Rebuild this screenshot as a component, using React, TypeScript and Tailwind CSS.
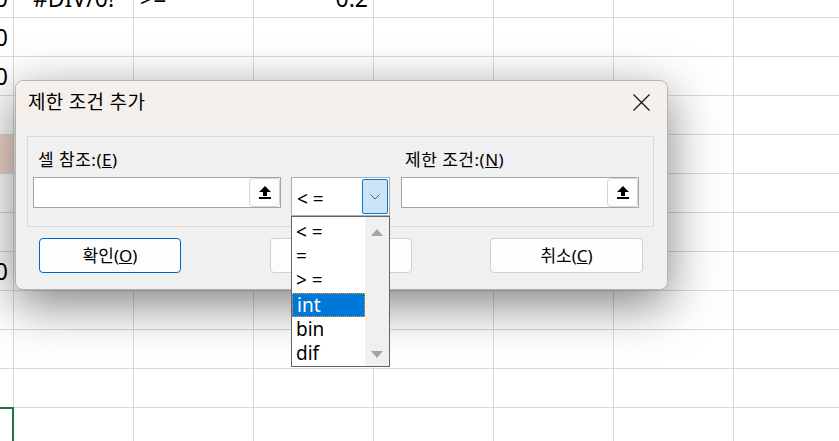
import React from "react";

const cols = [14, 120, 120, 120, 120, 120, 120, 120];
const font = { fontFamily: '"Noto Sans", "Noto Sans CJK KR", sans-serif' };

const cellText: Record<string, { text: string; align: string }> = {
  "0-0": { text: "0", align: "justify-end pr-[5px]" },
  "1-0": { text: "0", align: "justify-end pr-[5px]" },
  "2-0": { text: "0", align: "justify-end pr-[5px]" },
  "7-0": { text: "0", align: "justify-end pr-[5px]" },
  "0-1": { text: "#DIV/0!", align: "justify-center" },
  "0-2": { text: ">=", align: "justify-start pl-[6px]" },
  "0-3": { text: "0.2", align: "justify-end pr-[5px]" },
};

const Sheet = () => (
  <div className="mt-[-21px] text-[23px] text-black" style={font}>
    {Array.from({ length: 12 }).map((_, r) => (
      <div key={r} className="flex h-[39px]">
        {cols.map((w, c) => {
          const cell = cellText[`${r}-${c}`];
          const pink = r === 4 && c === 0;
          const sel = r === 11 && c === 0;
          return (
            <div
              key={c}
              style={{ width: w }}
              className={`shrink-0 flex items-center overflow-hidden border-r border-b border-[#d9d9d9] ${
                pink ? "bg-[#f0d8cc]" : ""
              } ${sel ? "border-t-2 border-r-2 border-t-[#217346] border-r-[#217346] -mt-px" : ""} ${
                cell ? cell.align : ""
              }`}
            >
              {cell && <span className="whitespace-nowrap leading-none">{cell.text}</span>}
            </div>
          );
        })}
      </div>
    ))}
  </div>
);

const UpArrow = () => (
  <svg width="12" height="13" viewBox="0 0 12 13">
    <polygon points="6,0 12,6 8,6 8,10 4,10 4,6 0,6" fill="#000" />
    <rect x="0" y="11" width="12" height="2" fill="#000" />
  </svg>
);

const RefInput = ({ width }: { width: number }) => (
  <div
    style={{ width }}
    className="h-[31px] flex items-center justify-end bg-white border border-[#a5a5a5]"
  >
    <div className="w-[31px] h-[29px] flex items-center justify-center bg-[#fdfdfd] border border-[#d5d5d5] rounded-[4px]">
      <UpArrow />
    </div>
  </div>
);

const items = ["< =", "=", "> =", "int", "bin", "dif"];

const Dropdown = () => (
  <div className="absolute left-[291px] top-[216px] w-[99px] h-[151px] bg-white border border-[#646464] flex" style={font}>
    <div className="flex-1 flex flex-col pt-[3px]">
      {items.map((it) => (
        <div
          key={it}
          className={`h-[24.6px] flex items-center pl-[4px] text-[19px] leading-none ${
            it === "int"
              ? "bg-[#0078d7] text-white border border-dotted border-[#f39c3a] pl-[3px]"
              : "text-black"
          }`}
        >
          {it}
        </div>
      ))}
    </div>
    <div className="w-[24px] bg-[#f0f0f0] flex flex-col items-center justify-between pt-[12px] pb-[8px]">
      <svg width="12" height="7" viewBox="0 0 12 7">
        <polygon points="6,0 12,7 0,7" fill="#a3a3a3" />
      </svg>
      <svg width="12" height="7" viewBox="0 0 12 7">
        <polygon points="0,0 12,0 6,7" fill="#a3a3a3" />
      </svg>
    </div>
  </div>
);

const Dialog = () => (
  <div
    className="absolute left-[15px] top-[80px] w-[653px] h-[210px] rounded-[8px] border border-[#b4b4b4] bg-[#f0f0f0] overflow-hidden shadow-[0_14px_50px_rgba(0,0,0,0.5)] text-black"
    style={font}
  >
    <div className="h-[43px] bg-[#f6f0ed] flex items-center justify-between pl-[12px] pr-[17px]">
      <span className="text-[19px] leading-none tracking-[0.3px]">제한 조건 추가</span>
      <svg width="17" height="17" viewBox="0 0 17 17">
        <path d="M0.5 0.5 L16.5 16.5 M16.5 0.5 L0.5 16.5" stroke="#1a1a1a" strokeWidth="1.3" />
      </svg>
    </div>
    <div className="ml-[11px] mr-[13px] mt-[12px] h-[91px] border border-[#dadada] pl-[5px] pt-[13px] flex gap-[10px]">
      <div className="flex flex-col">
        <span className="pl-[5px] text-[17px] leading-[20px] h-[27px] tracking-[0.5px]">
          셀 참조:(<u>E</u>)
        </span>
        <RefInput width={248} />
      </div>
      <div className="pt-[27px]">
        <div className="w-[99px] h-[39px] bg-white border border-[#adadad] flex items-center justify-between pl-[5px] pr-px">
          <span className="text-[19px] leading-none pt-[5px]">&lt; =</span>
          <div className="w-[26px] h-[35px] bg-[#cce4f7] border border-[#0078d4] rounded-[2px] flex items-center justify-center">
            <svg width="10" height="6" viewBox="0 0 10 6">
              <path d="M0.5 0.5 L5 5 L9.5 0.5" fill="none" stroke="#606060" strokeWidth="1" />
            </svg>
          </div>
        </div>
      </div>
      <div className="flex flex-col ml-px">
        <span className="pl-[4px] text-[17px] leading-[20px] h-[27px] tracking-[0.5px]">
          제한 조건:(<u>N</u>)
        </span>
        <RefInput width={238} />
      </div>
    </div>
    <div className="flex mt-[11px] pl-[23px] gap-0 text-[17px]">
      <button className="w-[142px] h-[35px] rounded-[4px] bg-[#fdfdfd] border border-[#0067c0]">
        확인(<u>O</u>)
      </button>
      <button className="ml-[89px] w-[142px] h-[35px] rounded-[4px] bg-[#fdfdfd] border border-[#d0d0d0]">
        추가(<u>A</u>)
      </button>
      <button className="ml-[78px] w-[153px] h-[35px] rounded-[4px] bg-[#fdfdfd] border border-[#d0d0d0]">
        취소(<u>C</u>)
      </button>
    </div>
  </div>
);

export default function App() {
  return (
    <div className="relative w-[839px] h-[441px] overflow-hidden bg-white">
      <Sheet />
      <Dialog />
      <Dropdown />
    </div>
  );
}
